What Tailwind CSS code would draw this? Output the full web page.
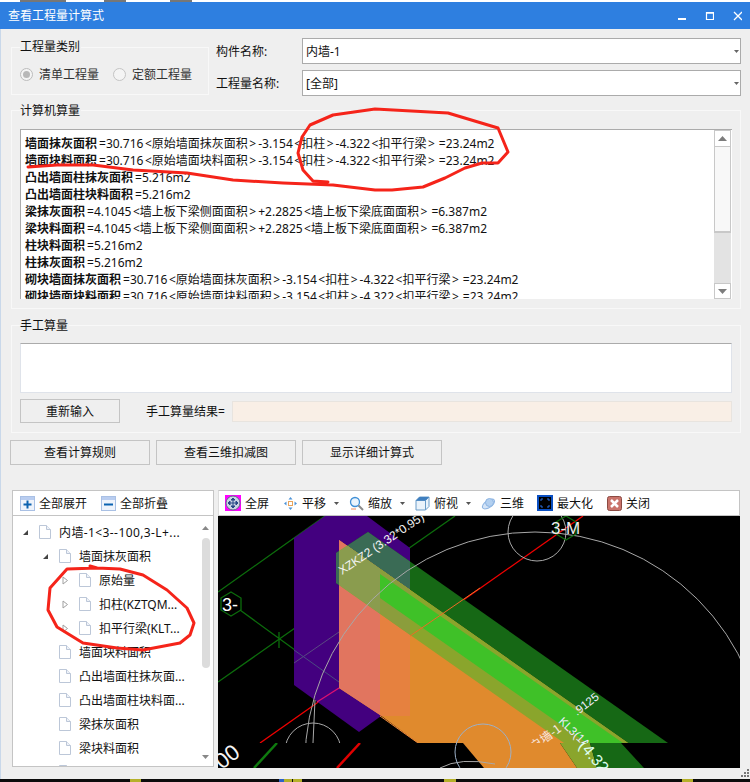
<!DOCTYPE html>
<html lang="zh">
<head>
<meta charset="utf-8">
<script src="https://cdn.jsdelivr.net/npm/@tailwindcss/browser@4"></script>
<title>查看工程量计算式</title>
</head>
<body class="m-0 bg-[#efefef]">
<div class="relative w-[750px] h-[782px] overflow-hidden bg-[#efefef] text-[12px] leading-[17px] text-[#111] font-['Noto_Sans','Noto_Sans_CJK_SC',sans-serif]">

  <!-- title bar -->
  <div class="relative h-[2px] bg-white">
    <span class="absolute left-[20px] w-[46px] h-[2px] bg-[#777]"></span>
    <span class="absolute left-[104px] w-[22px] h-[2px] bg-[#777]"></span>
    <span class="absolute left-[170px] w-[22px] h-[2px] bg-[#777]"></span>
  </div>
  <div class="h-[27px] bg-[#2e7fe0] flex items-center pl-[8px] text-[12px] text-white">
    <span class="flex-1">查看工程量计算式</span>
    <div class="flex items-center gap-[18px] pr-[8px]">
      <svg width="10" height="10" viewBox="0 0 10 10"><rect x="2" y="7" width="8" height="2" fill="#fff"/></svg>
      <svg width="10" height="10" viewBox="0 0 10 10"><path d="M2.500 1.500h7v7h-7z M2 2.200h8" fill="none" stroke="#fff" stroke-width="1.200"/></svg>
      <svg width="10" height="10" viewBox="0 0 10 10"><path d="M2 1l8 8M10 1l-8 8" stroke="#fff" stroke-width="1.300"/></svg>
    </div>
  </div>

  <div class="pl-[11px] pr-[9px]">
    <!-- row 1 -->
    <div class="mt-[9px] h-[58px] flex">
      <div class="relative mt-[9px] h-[48px] w-[198px] border border-[#f8f8f8] flex items-center pl-[8px] pt-[7px] gap-[14px]">
        <span class="absolute left-[8px] top-[-10px] bg-[#efefef] pr-[1px]">工程量类别</span>
        <div class="flex items-center gap-[6px] text-[#333]">
          <span class="w-[13px] h-[13px] rounded-full border border-[#bcbcbc] bg-[#f4f4f4] flex items-center justify-center"><span class="w-[7px] h-[7px] rounded-full bg-[#b8b8b8]"></span></span>
          <span>清单工程量</span>
        </div>
        <div class="flex items-center gap-[6px] text-[#333]">
          <span class="w-[13px] h-[13px] rounded-full border border-[#c4c4c4] bg-[#f4f4f4]"></span>
          <span>定额工程量</span>
        </div>
      </div>
      <div class="ml-[7px] flex-1 flex flex-col gap-[6px]">
        <div class="h-[26px] flex items-center">
          <span class="w-[86px]">构件名称:</span>
          <div class="flex-1 h-full bg-white border border-[#ababab] flex items-center pl-[3px] pr-[2px]">
            <span class="flex-1">内墙-1</span>
            <svg width="5" height="3" viewBox="0 0 5 3" class="mr-[-1px]"><path d="M0 0h5L2.500 3z" fill="#666"/></svg>
          </div>
        </div>
        <div class="h-[26px] flex items-center">
          <span class="w-[86px]">工程量名称:</span>
          <div class="flex-1 h-full bg-white border border-[#ababab] flex items-center pl-[3px] pr-[2px]">
            <span class="flex-1">[全部]</span>
            <svg width="5" height="3" viewBox="0 0 5 3" class="mr-[-1px]"><path d="M0 0h5L2.500 3z" fill="#666"/></svg>
          </div>
        </div>
      </div>
    </div>

    <!-- computed -->
    <div class="relative mt-[14px] h-[199px] border border-[#f8f8f8] pt-[18px] pl-[8px] pr-[8px]">
      <span class="absolute left-[8px] top-[-9px] bg-[#efefef] pr-[1px]">计算机算量</span>
      <div class="h-[170px] bg-white border-t border-l border-[#ababab] flex overflow-hidden">
        <div class="flex-1 pl-[4px] pt-[5px] overflow-hidden whitespace-nowrap">
          <div><b class="font-semibold">墙面抹灰面积</b><span class="pl-[2px]">=</span>30.716<span class="pl-[1.5px]">&lt;</span>原始墙面抹灰面积<span class="pl-[1.5px] pr-[2px]">&gt;</span>-3.154<span class="pl-[1.5px]">&lt;</span>扣柱<span class="pl-[1.5px] pr-[2px]">&gt;</span>-4.322<span class="pl-[1.5px]">&lt;</span>扣平行梁<span class="pl-[1.5px] pr-[2px]">&gt;</span><span class="pl-[2px]">=</span>23.24m2</div>
          <div><b class="font-semibold">墙面块料面积</b><span class="pl-[2px]">=</span>30.716<span class="pl-[1.5px]">&lt;</span>原始墙面块料面积<span class="pl-[1.5px] pr-[2px]">&gt;</span>-3.154<span class="pl-[1.5px]">&lt;</span>扣柱<span class="pl-[1.5px] pr-[2px]">&gt;</span>-4.322<span class="pl-[1.5px]">&lt;</span>扣平行梁<span class="pl-[1.5px] pr-[2px]">&gt;</span><span class="pl-[2px]">=</span>23.24m2</div>
          <div><b class="font-semibold">凸出墙面柱抹灰面积</b><span class="pl-[2px]">=</span>5.216m2</div>
          <div><b class="font-semibold">凸出墙面柱块料面积</b><span class="pl-[2px]">=</span>5.216m2</div>
          <div><b class="font-semibold">梁抹灰面积</b><span class="pl-[2px]">=</span>4.1045<span class="pl-[1.5px]">&lt;</span>墙上板下梁侧面面积<span class="pl-[1.5px] pr-[2px]">&gt;</span>+2.2825<span class="pl-[1.5px]">&lt;</span>墙上板下梁底面面积<span class="pl-[1.5px] pr-[2px]">&gt;</span><span class="pl-[2px]">=</span>6.387m2</div>
          <div><b class="font-semibold">梁块料面积</b><span class="pl-[2px]">=</span>4.1045<span class="pl-[1.5px]">&lt;</span>墙上板下梁侧面面积<span class="pl-[1.5px] pr-[2px]">&gt;</span>+2.2825<span class="pl-[1.5px]">&lt;</span>墙上板下梁底面面积<span class="pl-[1.5px] pr-[2px]">&gt;</span><span class="pl-[2px]">=</span>6.387m2</div>
          <div><b class="font-semibold">柱块料面积</b><span class="pl-[2px]">=</span>5.216m2</div>
          <div><b class="font-semibold">柱抹灰面积</b><span class="pl-[2px]">=</span>5.216m2</div>
          <div><b class="font-semibold">砌块墙面抹灰面积</b><span class="pl-[2px]">=</span>30.716<span class="pl-[1.5px]">&lt;</span>原始墙面抹灰面积<span class="pl-[1.5px] pr-[2px]">&gt;</span>-3.154<span class="pl-[1.5px]">&lt;</span>扣柱<span class="pl-[1.5px] pr-[2px]">&gt;</span>-4.322<span class="pl-[1.5px]">&lt;</span>扣平行梁<span class="pl-[1.5px] pr-[2px]">&gt;</span><span class="pl-[2px]">=</span>23.24m2</div>
          <div><b class="font-semibold">砌块墙面块料面积</b><span class="pl-[2px]">=</span>30.716<span class="pl-[1.5px]">&lt;</span>原始墙面块料面积<span class="pl-[1.5px] pr-[2px]">&gt;</span>-3.154<span class="pl-[1.5px]">&lt;</span>扣柱<span class="pl-[1.5px] pr-[2px]">&gt;</span>-4.322<span class="pl-[1.5px]">&lt;</span>扣平行梁<span class="pl-[1.5px] pr-[2px]">&gt;</span><span class="pl-[2px]">=</span>23.24m2</div>
        </div>
        <div class="w-[17px] mr-[1px] flex flex-col bg-[#e3e3e3]">
          <div class="h-[17px] bg-white border border-[#c8c8c8] flex items-center justify-center"><svg width="9" height="5" viewBox="0 0 9 5"><path d="M4.500 0L9 5H0z" fill="#7c7c7c"/></svg></div>
          <div class="h-[86px] bg-[#f8f8f8] border-x border-b-2 border-[#c8c8c8]"></div>
          <div class="flex-1"></div>
          <div class="h-[16px] bg-white border border-[#c8c8c8] flex items-center justify-center"><svg width="9" height="5" viewBox="0 0 9 5"><path d="M0 0h9L4.500 5z" fill="#7c7c7c"/></svg></div>
        </div>
      </div>
    </div>

    <!-- manual -->
    <div class="relative mt-[16px] h-[108px] border border-[#f8f8f8] pt-[17px] px-[8px]">
      <span class="absolute left-[8px] top-[-9px] bg-[#efefef] pr-[1px]">手工算量</span>
      <div class="h-[50px] bg-white border border-[#dfe3ea] border-t-[#ababab]"></div>
      <div class="mt-[6px] h-[24px] flex items-center">
        <div class="w-[100px] h-[24px] border border-[#c4c4c4] flex items-center justify-center">重新输入</div>
        <span class="ml-[26px] w-[86px]">手工算量结果=</span>
        <div class="flex-1 h-[21px] bg-[#f9efe6] border border-[#e8e4df]"></div>
      </div>
    </div>

    <!-- buttons -->
    <div class="mt-[7px] ml-[-1px] flex gap-[6px]">
      <div class="w-[140px] h-[25px] border border-[#c4c4c4] flex items-center justify-center">查看计算规则</div>
      <div class="w-[140px] h-[25px] border border-[#c4c4c4] flex items-center justify-center">查看三维扣减图</div>
      <div class="w-[140px] h-[25px] border border-[#c4c4c4] flex items-center justify-center">显示详细计算式</div>
    </div>

    <!-- bottom -->
    <div class="mt-[25px] ml-[1px] h-[278px] flex gap-[4px]">
      <!-- tree panel -->
      <div class="w-[202px] h-[277px] border border-[#c4c4c4] bg-white flex flex-col">
        <div class="h-[25px] border-b border-[#c4c4c4] flex items-center pl-[7px] shrink-0">
          <svg width="15" height="15" viewBox="0 0 15 15"><rect x=".5" y=".5" width="14" height="14" fill="#eef3fb" stroke="#a9c0e4"/><rect x="1" y="1" width="13" height="3" fill="#b9cdf0"/><path d="M3.500 8.500h8M7.500 4.500v8" stroke="#0b62b0" stroke-width="2"/></svg>
          <span class="ml-[4px] w-[48px]">全部展开</span>
          <svg width="15" height="15" viewBox="0 0 15 15" class="ml-[14px]"><rect x=".5" y=".5" width="14" height="14" fill="#eef3fb" stroke="#a9c0e4"/><rect x="1" y="1" width="13" height="3" fill="#b9cdf0"/><path d="M3 8.500h9" stroke="#0b62b0" stroke-width="2"/></svg>
          <span class="ml-[4px]">全部折叠</span>
        </div>
        <div class="relative flex-1 overflow-hidden pt-[4px]">
          <div class="flex flex-col">
            <div class="h-[24px] flex items-center pl-[9px]">
              <svg width="7" height="7" viewBox="0 0 7 7" class="mr-[6px]"><path d="M6 1v5H1z" fill="#444"/></svg>
              <svg width="12" height="14" viewBox="0 0 12 14" class="ml-[4px]"><path d="M.5.500h7l4 4v9h-11z" fill="#fff" stroke="#bcc7d8"/><path d="M7.500.500v4h4" fill="#eef2f8" stroke="#bcc7d8"/></svg>
              <span class="ml-[8px] whitespace-nowrap tracking-[0.4px]">内墙-1&lt;3--100,3-L+...</span>
            </div>
            <div class="h-[24px] flex items-center pl-[29px]">
              <svg width="7" height="7" viewBox="0 0 7 7" class="mr-[6px]"><path d="M6 1v5H1z" fill="#444"/></svg>
              <svg width="12" height="14" viewBox="0 0 12 14" class="ml-[4px]"><path d="M.5.500h7l4 4v9h-11z" fill="#fff" stroke="#bcc7d8"/><path d="M7.500.500v4h4" fill="#eef2f8" stroke="#bcc7d8"/></svg>
              <span class="ml-[8px] whitespace-nowrap">墙面抹灰面积</span>
            </div>
            <div class="h-[24px] flex items-center pl-[49px]">
              <svg width="7" height="9" viewBox="0 0 7 9" class="mr-[6px]"><path d="M1 1l4.500 3.500L1 8z" fill="#fff" stroke="#a0a0a0"/></svg>
              <svg width="12" height="14" viewBox="0 0 12 14" class="ml-[4px]"><path d="M.5.500h7l4 4v9h-11z" fill="#fff" stroke="#bcc7d8"/><path d="M7.500.500v4h4" fill="#eef2f8" stroke="#bcc7d8"/></svg>
              <span class="ml-[8px] whitespace-nowrap">原始量</span>
            </div>
            <div class="h-[24px] flex items-center pl-[49px]">
              <svg width="7" height="9" viewBox="0 0 7 9" class="mr-[6px]"><path d="M1 1l4.500 3.500L1 8z" fill="#fff" stroke="#a0a0a0"/></svg>
              <svg width="12" height="14" viewBox="0 0 12 14" class="ml-[4px]"><path d="M.5.500h7l4 4v9h-11z" fill="#fff" stroke="#bcc7d8"/><path d="M7.500.500v4h4" fill="#eef2f8" stroke="#bcc7d8"/></svg>
              <span class="ml-[8px] whitespace-nowrap">扣柱(KZTQM...</span>
            </div>
            <div class="h-[24px] flex items-center pl-[49px]">
              <svg width="7" height="9" viewBox="0 0 7 9" class="mr-[6px]"><path d="M1 1l4.500 3.500L1 8z" fill="#fff" stroke="#a0a0a0"/></svg>
              <svg width="12" height="14" viewBox="0 0 12 14" class="ml-[4px]"><path d="M.5.500h7l4 4v9h-11z" fill="#fff" stroke="#bcc7d8"/><path d="M7.500.500v4h4" fill="#eef2f8" stroke="#bcc7d8"/></svg>
              <span class="ml-[8px] whitespace-nowrap">扣平行梁(KLT...</span>
            </div>
            <div class="h-[24px] flex items-center pl-[46px]">
              <svg width="12" height="14" viewBox="0 0 12 14"><path d="M.5.500h7l4 4v9h-11z" fill="#fff" stroke="#bcc7d8"/><path d="M7.500.500v4h4" fill="#eef2f8" stroke="#bcc7d8"/></svg>
              <span class="ml-[8px] whitespace-nowrap">墙面块料面积</span>
            </div>
            <div class="h-[24px] flex items-center pl-[46px]">
              <svg width="12" height="14" viewBox="0 0 12 14"><path d="M.5.500h7l4 4v9h-11z" fill="#fff" stroke="#bcc7d8"/><path d="M7.500.500v4h4" fill="#eef2f8" stroke="#bcc7d8"/></svg>
              <span class="ml-[8px] whitespace-nowrap">凸出墙面柱抹灰面...</span>
            </div>
            <div class="h-[24px] flex items-center pl-[46px]">
              <svg width="12" height="14" viewBox="0 0 12 14"><path d="M.5.500h7l4 4v9h-11z" fill="#fff" stroke="#bcc7d8"/><path d="M7.500.500v4h4" fill="#eef2f8" stroke="#bcc7d8"/></svg>
              <span class="ml-[8px] whitespace-nowrap">凸出墙面柱块料面...</span>
            </div>
            <div class="h-[24px] flex items-center pl-[46px]">
              <svg width="12" height="14" viewBox="0 0 12 14"><path d="M.5.500h7l4 4v9h-11z" fill="#fff" stroke="#bcc7d8"/><path d="M7.500.500v4h4" fill="#eef2f8" stroke="#bcc7d8"/></svg>
              <span class="ml-[8px] whitespace-nowrap">梁抹灰面积</span>
            </div>
            <div class="h-[24px] flex items-center pl-[46px]">
              <svg width="12" height="14" viewBox="0 0 12 14"><path d="M.5.500h7l4 4v9h-11z" fill="#fff" stroke="#bcc7d8"/><path d="M7.500.500v4h4" fill="#eef2f8" stroke="#bcc7d8"/></svg>
              <span class="ml-[8px] whitespace-nowrap">梁块料面积</span>
            </div>
            <div class="h-[24px] flex items-center pl-[46px]">
              <svg width="12" height="14" viewBox="0 0 12 14"><path d="M.5.500h7l4 4v9h-11z" fill="#fff" stroke="#bcc7d8"/><path d="M7.500.500v4h4" fill="#eef2f8" stroke="#bcc7d8"/></svg>
            </div>
          </div>
          <div class="absolute right-[3px] top-0 bottom-0 w-[9px] flex flex-col items-center pt-[10px] pb-[7px]">
            <svg width="7" height="4" viewBox="0 0 7 4"><path d="M3.500 0L7 4H0z" fill="#888"/></svg>
            <div class="mt-[8px] w-[8px] h-[130px] rounded-full bg-[#dcdcdc]"></div>
            <div class="flex-1"></div>
            <svg width="7" height="4" viewBox="0 0 7 4"><path d="M0 0h7L3.500 4z" fill="#888"/></svg>
          </div>
        </div>
      </div>

      <!-- 3D panel -->
      <div class="w-[522px] flex flex-col">
        <div class="h-[26px] border border-[#c4c4c4] border-l-[#dcdcdc] bg-white flex items-center pl-[6px] shrink-0 whitespace-nowrap">
          <svg width="16" height="16" viewBox="0 0 16 16"><rect width="16" height="16" fill="#f0f"/><circle cx="8" cy="8" r="7" fill="#c9d4e4" stroke="#5b6c86"/><path d="M8 3v10M3 8h10M8 3l-2 2h4zM8 13l-2-2h4zM3 8l2-2v4zM13 8l-2-2v4z" stroke="#274a86" fill="#274a86"/></svg>
          <span class="ml-[4px] w-[24px]">全屏</span>
          <svg width="15" height="15" viewBox="0 0 15 15" class="ml-[14px]"><path d="M7.500 1l2 2.500h-4zM7.500 14l2-2.500h-4zM1 7.500l2.500-2v4zM14 7.500l-2.500-2v4z" fill="#4d93d8"/><rect x="5.500" y="5.500" width="4" height="4" fill="#fff" stroke="#e8a45c"/></svg>
          <span class="ml-[4px] w-[24px]">平移</span>
          <svg width="5" height="3" viewBox="0 0 5 3" class="ml-[8px]"><path d="M0 0h5L2.500 3z" fill="#555"/></svg>
          <svg width="15" height="15" viewBox="0 0 15 15" class="ml-[10px]"><circle cx="6" cy="6" r="4.500" fill="#eaf4fd" stroke="#3f8fd6" stroke-width="1.300"/><path d="M9.500 9.500l4.500 4.500" stroke="#8a8a8a" stroke-width="2"/><path d="M2 13h5" stroke="#e8895c"/></svg>
          <span class="ml-[4px] w-[24px]">缩放</span>
          <svg width="5" height="3" viewBox="0 0 5 3" class="ml-[8px]"><path d="M0 0h5L2.500 3z" fill="#555"/></svg>
          <svg width="15" height="15" viewBox="0 0 15 15" class="ml-[10px]"><path d="M1 4.500L4.500 1H14v9.500L10.500 14H1z" fill="#eaf3fb" stroke="#6a9cc8"/><path d="M1 4.500h9.500V14M10.500 4.500L14 1" fill="none" stroke="#6a9cc8"/><path d="M1 4.500L4.500 1H14l-3.500 3.500z" fill="#3f7fbf"/></svg>
          <span class="ml-[4px] w-[24px]">俯视</span>
          <svg width="5" height="3" viewBox="0 0 5 3" class="ml-[8px]"><path d="M0 0h5L2.500 3z" fill="#555"/></svg>
          <svg width="15" height="15" viewBox="0 0 15 15" class="ml-[10px]"><ellipse cx="7.500" cy="8" rx="7" ry="3.500" transform="rotate(-35 7.500 8)" fill="#d4e4f7" stroke="#8db4e2"/><circle cx="8.500" cy="6.500" r="4" fill="#b3d0f0" stroke="#8db4e2"/></svg>
          <span class="ml-[4px] w-[24px]">三维</span>
          <svg width="16" height="16" viewBox="0 0 16 16" class="ml-[13px]"><rect x="1" y="1" width="14" height="14" fill="#000" stroke="#0a4fc2" stroke-width="2"/><path d="M4 4l2 0M4 4l0 2M12 4l-2 0M12 4l0 2M4 12l2 0M4 12l0-2M12 12l-2 0M12 12l0-2" stroke="#2a6fe0"/></svg>
          <span class="ml-[4px] w-[36px]">最大化</span>
          <svg width="15" height="15" viewBox="0 0 15 15" class="ml-[14px]"><rect x=".5" y=".5" width="14" height="14" rx="2" fill="#c9736a" stroke="#8c4a42"/><path d="M4 4l7 7M11 4l-7 7" stroke="#fff" stroke-width="2.500"/></svg>
          <span class="ml-[4px]">关闭</span>
        </div>
        <div class="h-[252px] bg-black overflow-hidden">
          <svg width="522" height="252" viewBox="218 516 522 252" class="block font-['Liberation_Sans',sans-serif]">
            <defs>
              <clipPath id="wall"><path d="M339 540L628 743H418L380 715L339 688z"/></clipPath>
              <clipPath id="band"><path d="M368 532L668 743H564L336 583V553z"/></clipPath>
              <clipPath id="upper"><rect x="218" y="516" width="522" height="227"/></clipPath>
              <clipPath id="lower"><rect x="218" y="743" width="522" height="25"/></clipPath>
            </defs>
            <g clip-path="url(#upper)">
              <path d="M218 592L325 516M218 682L455 516" stroke="#0c6c0c" stroke-width="1.300" fill="none"/>
              <path d="M240 610L339 682M279 632V648" stroke="#0c6c0c" stroke-width="1.300" fill="none"/>
              <path d="M260 743L583 516" stroke="#f00000" stroke-width="1.300" fill="none"/>
              <path d="M294 538L325 516H367L410 548V695L359 732L294 685z" fill="#43007f"/>
              <path d="M294 663L339 632M367 612L410 582" stroke="#5a4a82" fill="none"/>
              <path d="M294 650L339 682" stroke="#4b4a82" fill="none"/>
              <path d="M317 702L339 688" stroke="#e01070" stroke-width="1.300" fill="none"/>
              <path d="M368 532L668 743H564L336 583V553z" fill="#166815"/>
              <path d="M294 538L325 516H367L410 548V695L359 732L294 685z" fill="#3a6b55" clip-path="url(#band)"/>
              <path d="M339 540L628 743H418L380 715L339 688z" fill="#e08a2d"/>
              <g clip-path="url(#wall)">
                <rect x="339" y="516" width="41" height="227" fill="#e1755f"/>
                <rect x="380" y="516" width="30" height="200" fill="#e6813f"/>
                <path d="M368 532L668 743H564L336 583V553z" fill="#8aa52c"/>
                <g clip-path="url(#band)">
                  <rect x="339" y="516" width="41" height="150" fill="#8a9c4e"/>
                  <rect x="380" y="516" width="30" height="150" fill="#8b9d3c"/>
                </g>
                <path d="M380 574L623 743H587L380 598z" fill="#3fc128"/>
              </g>
              <path d="M380 716L418 743" stroke="#f08a3c" fill="none"/>
              <path d="M410 636L480 588" stroke="#ef6a25" fill="none"/>
              <circle cx="535" cy="762" r="230" stroke="#a8a8a8" fill="none"/>
              <circle cx="537" cy="532" r="29" stroke="#a8a8a8" fill="none"/>
              <circle cx="313" cy="751" r="28" stroke="#a8a8a8" fill="none"/>
              <circle cx="483" cy="752" r="28" stroke="#9cb0c8" fill="none"/>
              <path d="M315 700L313 743" stroke="#a8a8a8" fill="none"/>
              <path d="M231 592L241 598V610L231 616L221 610V598z" stroke="#0c6c0c" stroke-width="1.300" fill="none"/>
              <path d="M566 516L576 522V534L566 540L556 534V522z" stroke="#0c6c0c" stroke-width="1.300" fill="none"/>
              <text x="222" y="611" fill="#fff" font-size="18">3-</text>
              <text x="551" y="534" fill="#eee" font-size="17">3-M</text>
              <text transform="translate(342 575) rotate(-34)" fill="#f4f4f4" font-size="12">XZKZ2 (3.32*0.95)</text>
              <text transform="translate(577 716) rotate(-38)" fill="#eef" font-size="11.500">.9125</text>
              <text transform="translate(558 722) rotate(44)" fill="#eef" font-size="11.500">KL3(1A)</text>
              <text transform="translate(534 751) rotate(-36)" fill="#f8e8e0" font-size="12" class="font-['Noto_Sans_CJK_SC']">户墙-1</text>
            </g>
            <g clip-path="url(#lower)">
              <path d="M463 743H560L577 768H484z" fill="#e08a2d"/>
              <path d="M560 743H590L597 768H577z" fill="#8aa52c"/>
              <path d="M590 743H621L644 768H597z" fill="#166815"/>
              <path d="M277 743L254 768" stroke="#0f7a0f" stroke-width="2.500"/>
              <path d="M360 743L337 768" stroke="#e00000" stroke-width="2.500"/>
              <path d="M440 768Q460 757 495 764" stroke="#a8a8a8" fill="none"/>
              <circle cx="483" cy="752" r="28" stroke="#9cb0c8" fill="none"/>
              <text transform="translate(222 770) rotate(-38)" fill="#f4f4f4" font-size="22">00</text>
              <text transform="translate(578 746) rotate(50)" fill="#dfe" font-size="16">(4.32</text>
            </g>
          </svg>
        </div>
      </div>
    </div>

    <!-- resize grip -->
    <div class="h-[11px] flex justify-end">
      <svg width="9" height="9" viewBox="0 0 9 9" class="mr-[-9px] mt-[1px]"><path d="M6 0h2v2H6zM3 3h2v2H3zM6 3h2v2H6zM0 6h2v2H0zM3 6h2v2H3zM6 6h2v2H6z" fill="#777"/></svg>
    </div>
  </div>

  <!-- window's left edge -->
  <div class="absolute left-0 top-[29px] bottom-[3px] w-[1px] bg-[#c9d8ea]"></div>

  <!-- strip under the window -->
  <div class="absolute left-0 right-0 bottom-0 h-[3px] bg-[#0c0c0c]">
    <span class="absolute left-[130px] w-[11px] h-[3px] bg-[#b5b02a]"></span>
    <span class="absolute left-[279px] w-[5px] h-[3px] bg-[#2d62c8]"></span>
    <span class="absolute left-[284px] w-[8px] h-[3px] bg-[#b5b02a]"></span>
    <span class="absolute left-[293px] w-[9px] h-[3px] bg-[#b5b02a]"></span>
    <span class="absolute left-[444px] w-[12px] h-[3px] bg-[#b5b02a]"></span>
    <span class="absolute left-[682px] w-[11px] h-[3px] bg-[#b5b02a]"></span>
  </div>

  <!-- red hand annotations -->
  <svg class="absolute left-0 top-0 pointer-events-none" width="750" height="782" viewBox="0 0 750 782" fill="none" stroke="#f5241a" stroke-width="3" stroke-linejoin="round" stroke-linecap="round">
    <path d="M328 182L313 181L303 170L298 153L302 137L310 125L333 115L375 109L448 113L498 128L508 152L498 163L482 163L465 168L445 178L423 187L392 190L375 190L333 185L283 183L233 180L187 173L133 170L93 165L57 165L28 167"/>
    <path d="M90 566L97 568L67 569L50 588L48 610L57 627L83 643L117 648L143 650L180 643L190 635L194 623L187 608L167 590L143 575L120 569L97 568"/>
  </svg>
</div>
</body>
</html>
